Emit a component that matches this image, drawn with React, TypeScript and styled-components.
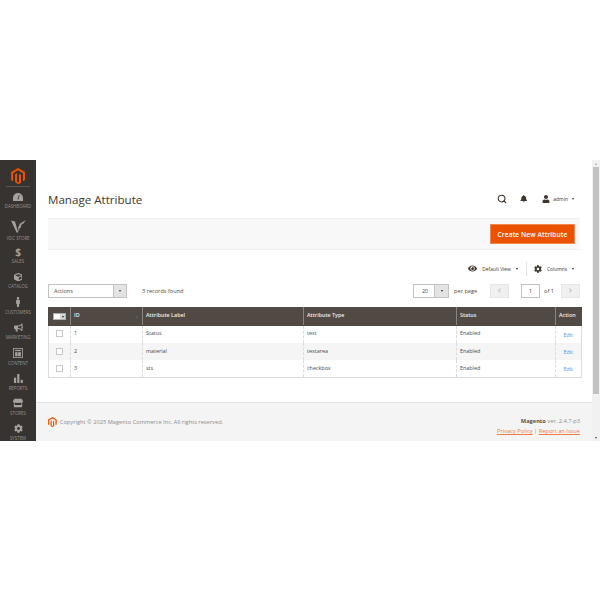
import React from 'react';
import styled, { createGlobalStyle } from 'styled-components';
import { FaCube, FaMale, FaBullhorn, FaStore, FaCog, FaBell, FaUser, FaEye, FaChevronLeft, FaChevronRight } from 'react-icons/fa';
import { FiSearch } from 'react-icons/fi';

const Global = createGlobalStyle`
  html, body { margin: 0; padding: 0; background: #fff; }
  body { font-family: "Open Sans", "Liberation Sans", sans-serif; }
  * { box-sizing: border-box; }
`;

const Page = styled.div`
  height: 600px;
  padding-top: 160px;
`;
const Frame = styled.div`
  height: 281px;
  display: flex;
  overflow: hidden;
`;
const Sidebar = styled.nav`
  width: 36px;
  flex: none;
  background: #373330;
  display: flex;
  flex-direction: column;
  align-items: center;
`;
const LogoBox = styled.div`
  height: 32px;
  width: 100%;
  padding-top: 8px;
  display: flex;
  justify-content: center;
  color: #eb5202;
  position: relative;
  &::after {
    content: '';
    position: absolute;
    left: 6px;
    right: 6px;
    bottom: 0;
    height: 1px;
    background: #5a5651;
  }
`;
const NavItem = styled.div<{ $h: number }>`
  height: ${p => p.$h}px;
  flex: none;
  width: 100%;
  display: flex;
  flex-direction: column;
  align-items: center;
  justify-content: flex-end;
  color: #96928d;
  font-size: 4.4px;
  line-height: 6px;
  white-space: nowrap;
  text-transform: uppercase;
  svg { color: #a5a19c; display: block; margin-bottom: 2px; }
`;
const Dollar = styled.span`
  font-size: 10px;
  line-height: 10px;
  font-weight: 700;
  color: #a5a19c;
  margin-bottom: 1px;
`;
const Main = styled.div`
  flex: 1;
  min-width: 0;
  display: flex;
  flex-direction: column;
`;
const Content = styled.div`
  flex: 1;
  padding: 0 12px 0 12px;
`;
const Header = styled.header`
  height: 58px;
  padding-top: 29px;
  display: flex;
  align-items: flex-start;
  justify-content: space-between;
`;
const Title = styled.h1`
  margin: 0;
  font-size: 11.6px;
  line-height: 21px;
  font-weight: 400;
  color: #41362f;
`;
const TopActions = styled.div`
  display: flex;
  align-items: center;
  height: 20px;
  color: #41362f;
  font-size: 5px;
  padding-right: 6px;
`;
const TopIcon = styled.span<{ $gap: number }>`
  display: flex;
  margin-right: ${p => p.$gap}px;
`;
const Caret = styled.span`
  display: inline-block;
  width: 0;
  height: 0;
  margin-left: 4px;
  border-left: 1.6px solid transparent;
  border-right: 1.6px solid transparent;
  border-top: 2px solid #41362f;
`;
const ActionBar = styled.div`
  height: 32px;
  background: #f8f8f8;
  border-top: 1px solid #eee;
  border-bottom: 1px solid #eee;
  display: flex;
  align-items: center;
  justify-content: flex-end;
  padding-right: 5px;
`;
const Primary = styled.button`
  width: 85px;
  height: 20px;
  border: 1px solid #f4874e;
  background: #eb5202;
  color: #fff;
  font-family: inherit;
  font-size: 6.6px;
  font-weight: 600;
  letter-spacing: 0.1px;
  padding: 0;
`;
const ViewRow = styled.div`
  height: 19px;
  margin-top: 9px;
  display: flex;
  justify-content: flex-end;
  align-items: center;
  color: #41362f;
  font-size: 4.9px;
  padding-right: 6px;
`;
const ViewItem = styled.div`
  display: flex;
  align-items: center;
  gap: 5px;
`;
const Divider = styled.div`
  width: 1px;
  height: 14px;
  background: #e3e3e3;
  margin: 0 7px 0 8px;
`;
const ControlRow = styled.div`
  height: 15px;
  margin-top: 5px;
  display: flex;
  align-items: center;
  color: #514943;
  font-size: 5.6px;
`;
const Select = styled.div<{ $w: number; $btn: number }>`
  width: ${p => p.$w}px;
  height: 14px;
  border: 1px solid #c2c2c2;
  display: flex;
  background: #fff;
  color: #514943;
  font-size: 5.5px;
  line-height: 12px;
  span:first-child { flex: 1; padding-left: 5px; }
  span:last-child {
    width: ${p => p.$btn}px;
    background: #e3e3e3;
    border-left: 1px solid #c2c2c2;
    display: flex;
    align-items: center;
    justify-content: center;
  }
`;
const SmallCaret = styled.i`
  width: 0;
  height: 0;
  border-left: 1.5px solid transparent;
  border-right: 1.5px solid transparent;
  border-top: 2px solid #303030;
`;
const Records = styled.span`
  margin-left: 15px;
  flex: 1;
`;
const PerPage = styled.span`
  margin: 0 13px 0 5px;
`;
const PageBtn = styled.div`
  width: 19px;
  height: 14px;
  background: #f0f0f0;
  border: 1px solid #e6e6e6;
  display: flex;
  align-items: center;
  justify-content: center;
  color: #b8b8b8;
`;
const PageInput = styled.div`
  width: 19px;
  height: 14px;
  margin-left: 12px;
  border: 1px solid #c2c2c2;
  display: flex;
  align-items: center;
  justify-content: center;
  background: #fff;
  color: #303030;
  font-size: 5.2px;
`;
const OfText = styled.span`
  margin: 0 7px 0 4px;
`;
const Table = styled.table`
  width: 532.5px;
  margin-top: 9px;
  border-collapse: collapse;
  table-layout: fixed;
  font-size: 5.4px;
  color: #4a4a4a;
`;
const Th = styled.th<{ $w: number }>`
  width: ${p => p.$w}px;
  height: 18px;
  padding: 0 3px 3px;
  background: #514943;
  border-left: 1px solid #8a837e;
  border-right: 1px solid #8a837e;
  border-top: 1px solid #514943;
  border-bottom: 1px solid #514943;
  color: #f0eeec;
  font-weight: 600;
  text-align: left;
  position: relative;
  &:first-child { border-left-color: #514943; padding: 0 3px; }
  &:last-child { border-right-color: #514943; }
`;
const SortMark = styled.span`
  position: absolute;
  right: 4px;
  top: 5px;
  color: #a9a29d;
  font-size: 4.5px;
`;
const Tr = styled.tr<{ $alt?: boolean }>`
  background: ${p => (p.$alt ? '#f5f5f5' : '#fff')};
  &:last-child td { border-bottom: 1px solid #dcdcdc; }
`;
const Td = styled.td<{ $blue?: boolean }>`
  height: 17.4px;
  padding: 0 3px 2px;
  border-left: 1px dashed #dcdcdc;
  border-right: 1px dashed #dcdcdc;
  color: ${p => (p.$blue ? '#3d9be9' : '#4a4a4a')};
  &:first-child { border-left: 1px solid #dcdcdc; }
  &:last-child { border-right: 1px solid #dcdcdc; text-align: center; padding: 1px 0 0; }
`;
const Check = styled.div`
  width: 7px;
  height: 7px;
  margin: 1px auto 0;
  border: 1px solid #c8c8c8;
  background: #fff;
`;
const HeadCheck = styled.div`
  width: 13px;
  height: 7px;
  margin: 0 auto;
  display: flex;
  background: #fff;
  border: 1px solid #adadad;
  span { flex: 1; }
  span:last-child {
    flex: none;
    width: 5px;
    background: #d6d6d6;
    display: flex;
    align-items: center;
    justify-content: center;
  }
`;
const Footer = styled.footer`
  height: 39px;
  flex: none;
  background: #f4f4f4;
  border-top: 1px solid #e3e3e3;
  padding: 9px 12px 0 12px;
  display: flex;
  justify-content: space-between;
  font-size: 5.7px;
  color: #8c8c8c;
`;
const Copy = styled.div`
  display: flex;
  align-items: center;
  height: 19px;
  gap: 3px;
  svg { color: #eb5202; }
`;
const Legal = styled.div`
  text-align: right;
  line-height: 10px;
  padding-top: 4px;
  b { color: #5a524c; font-weight: 700; }
  a { color: #ee7d45; text-decoration: underline; text-decoration-thickness: 0.5px; }
`;
const Scrollbar = styled.div`
  width: 8px;
  flex: none;
  background: #f1f1f1;
  display: flex;
  flex-direction: column;
`;
const Arrow = styled.div`
  height: 7px;
  flex: none;
  display: flex;
  align-items: center;
  justify-content: center;
`;
const UpCaret = styled.i`
  width: 0;
  height: 0;
  border-left: 1.5px solid transparent;
  border-right: 1.5px solid transparent;
  border-bottom: 2px solid #a3a3a3;
`;
const DownCaret = styled.i`
  width: 0;
  height: 0;
  border-left: 1.5px solid transparent;
  border-right: 1.5px solid transparent;
  border-top: 2px solid #505050;
`;
const Thumb = styled.div`
  height: 227px;
  flex: none;
  margin-left: 1px;
  margin-right: 1px;
  background: #c1c1c1;
`;
const Track = styled.div`
  flex: 1;
`;

const MagentoLogo = ({ size }: { size: number }) => (
  <svg width={size * 0.88} height={size} viewBox="1.6 0 20.8 24" fill="currentColor">
    <path d="M12 24l-4.455-2.572v-12l2.97-1.715v12.001L12 21.43l1.485-.716V8.714l2.97 1.715v12L12 24zM22.391 6v12l-2.969 1.714V7.713L12 3.43 4.574 7.713v12.001L1.609 18V6L12 0l10.391 6z" />
  </svg>
);
const GaugeIcon = () => (
  <svg width="10" height="8" viewBox="0 0 10 8" fill="currentColor">
    <path fillRule="evenodd" d="M0 8V5a5 5 0 0 1 10 0v3H0zM5.4 6.5 6.6 2.2 6 2 4.5 6.2z" />
  </svg>
);
const VdcIcon = () => (
  <svg width="15" height="13" viewBox="0 0 15 13" fill="currentColor">
    <path d="M0 0.5 L4 1.5 L7.2 12.5 L5.6 12.5 Z M3 5 L5 5.5 L6.3 10 Z" />
    <path d="M15 0 L12 4 L10 3.5 L11.2 5 L9.6 5.2 L10.4 7 L8.6 8 L7.8 12 L7 8 L9 3.5 Z" />
  </svg>
);
const ContentIcon = () => (
  <svg width="10" height="10" viewBox="0 0 12 12" fill="none" stroke="currentColor">
    <rect x="0.5" y="0.5" width="11" height="11" />
    <path d="M2.5 3h7" strokeWidth="1.5" />
    <path d="M3 5.5h2v4H3zM6.5 5.5H9v4H6.5z" fill="currentColor" />
  </svg>
);
const ReportsIcon = () => (
  <svg width="9" height="9" viewBox="0 0 10 10" fill="currentColor">
    <rect x="0" y="4" width="2.4" height="6" />
    <rect x="3.6" y="0" width="2.4" height="10" />
    <rect x="7.4" y="6.5" width="2.4" height="3.5" />
  </svg>
);

const navItems: { h: number; label: string; icon: React.ReactNode }[] = [
  { h: 22.5, label: 'Dashboard', icon: <GaugeIcon /> },
  { h: 32, label: 'VDC Store', icon: <VdcIcon /> },
  { h: 23, label: 'Sales', icon: <Dollar>$</Dollar> },
  { h: 25, label: 'Catalog', icon: <FaCube size={8.5} /> },
  { h: 25.5, label: 'Customers', icon: <FaMale size={10} /> },
  { h: 25.5, label: 'Marketing', icon: <FaBullhorn size={9} /> },
  { h: 25.5, label: 'Content', icon: <ContentIcon /> },
  { h: 25.5, label: 'Reports', icon: <ReportsIcon /> },
  { h: 25, label: 'Stores', icon: <FaStore size={10} /> },
  { h: 25, label: 'System', icon: <FaCog size={9} /> },
];

const rows = [
  { id: 1, label: 'Status', type: 'text' },
  { id: 2, label: 'material', type: 'textarea' },
  { id: 3, label: 'sts', type: 'checkbox' },
];

export default function App() {
  return (
    <Page>
      <Global />
      <Frame>
        <Sidebar>
          <LogoBox><MagentoLogo size={16} /></LogoBox>
          {navItems.map(n => (
            <NavItem key={n.label} $h={n.h}>
              {n.icon}
              {n.label}
            </NavItem>
          ))}
        </Sidebar>
        <Main>
          <Content>
            <Header>
              <Title>Manage Attribute</Title>
              <TopActions>
                <TopIcon $gap={13}><FiSearch size={10} strokeWidth={2.6} /></TopIcon>
                <TopIcon $gap={15}><FaBell size={7.5} /></TopIcon>
                <TopIcon $gap={3}><FaUser size={8} /></TopIcon>
                admin<Caret />
              </TopActions>
            </Header>
            <ActionBar><Primary>Create New Attribute</Primary></ActionBar>
            <ViewRow>
              <ViewItem><FaEye size={9} />Default View<SmallCaret /></ViewItem>
              <Divider />
              <ViewItem><FaCog size={8} />Columns<SmallCaret /></ViewItem>
            </ViewRow>
            <ControlRow>
              <Select $w={79} $btn={13}><span>Actions</span><span><SmallCaret /></span></Select>
              <Records>3 records found</Records>
              <Select $w={36} $btn={14}><span>&nbsp;&nbsp;20</span><span><SmallCaret /></span></Select>
              <PerPage>per page</PerPage>
              <PageBtn><FaChevronLeft size={5} /></PageBtn>
              <PageInput>1</PageInput>
              <OfText>of 1</OfText>
              <PageBtn><FaChevronRight size={5} /></PageBtn>
            </ControlRow>
            <Table>
              <thead>
                <tr>
                  <Th $w={22}><HeadCheck><span /><span><SmallCaret /></span></HeadCheck></Th>
                  <Th $w={72}>ID<SortMark>↓</SortMark></Th>
                  <Th $w={161}>Attribute Label</Th>
                  <Th $w={153}>Attribute Type</Th>
                  <Th $w={99}>Status</Th>
                  <Th $w={25.5}>Action</Th>
                </tr>
              </thead>
              <tbody>
                {rows.map((r, i) => (
                  <Tr key={r.id} $alt={i === 1}>
                    <Td><Check /></Td>
                    <Td>{r.id}</Td>
                    <Td>{r.label}</Td>
                    <Td>{r.type}</Td>
                    <Td>Enabled</Td>
                    <Td $blue>Edit</Td>
                  </Tr>
                ))}
              </tbody>
            </Table>
          </Content>
          <Footer>
            <Copy><MagentoLogo size={10} />Copyright © 2025 Magento Commerce Inc. All rights reserved.</Copy>
            <Legal>
              <div><b>Magento</b> ver. 2.4.7-p3</div>
              <div><a>Privacy Policy</a> | <a>Report an Issue</a></div>
            </Legal>
          </Footer>
        </Main>
        <Scrollbar>
          <Arrow><UpCaret /></Arrow>
          <Thumb />
          <Track />
          <Arrow><DownCaret /></Arrow>
        </Scrollbar>
      </Frame>
    </Page>
  );
}
